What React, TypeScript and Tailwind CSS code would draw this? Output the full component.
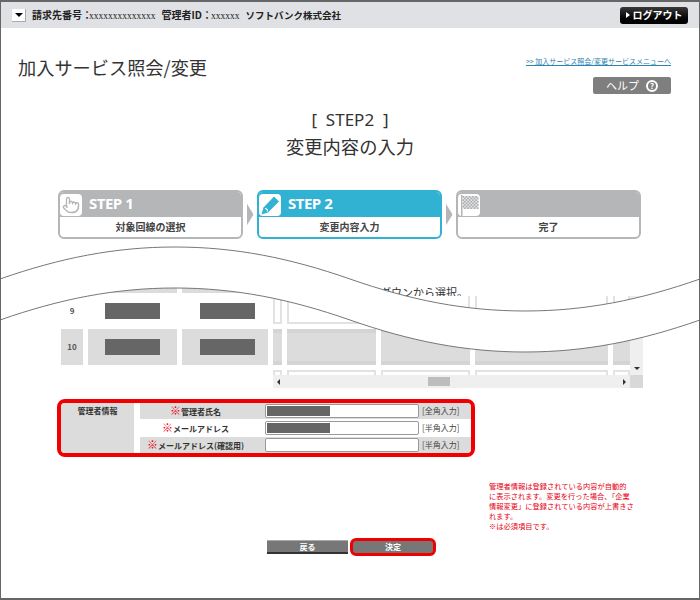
import React from 'react';
import { Pointer } from 'lucide-react';

const frozenRows = [
  { no: '', h: 'h-[5px]', gray: true, bars: false },
  { no: '9', h: 'h-[26px]', gray: false, bars: true },
  { no: '10', h: 'h-[36px]', gray: true, bars: true },
];

const scrollCols = [0, 1, 2, 3, 4];

const Bar = () => <div className="w-[55px] h-[16px] bg-[#666666]" />;

const FlagIcon = () => (
  <svg width="22" height="22" viewBox="0 0 22 22">
    <rect x="3" y="1" width="1.5" height="21" fill="#b4b6b8" />
    <rect x="4.5" y="2" width="16" height="13" fill="#e6e6e7" />
    {[0, 1, 2, 3, 4, 5, 6, 7, 8, 9].map((col) =>
      [0, 1, 2, 3, 4, 5, 6, 7].map((row) =>
        (col + row) % 2 === 0 ? (
          <rect key={`${col}-${row}`} x={4.5 + col * 1.6} y={2 + row * 1.625} width="1.6" height="1.625" fill="#a8aaac" />
        ) : null,
      ),
    )}
  </svg>
);

const PencilIcon = () => (
  <svg width="22" height="22" viewBox="0 0 22 22">
    <path d="M15 2.5l5 5L9 18.5l-6.5 2 2-7z" fill="#32b2d2" />
    <path d="M6 14.5c1.8 0 2.8 1.2 2.2 3" fill="none" stroke="#ffffff" strokeWidth="1.2" />
  </svg>
);

const StepCard = ({
  label,
  title,
  icon,
  active,
}: {
  label: string;
  title: string;
  icon: React.ReactNode;
  active?: boolean;
}) => (
  <div className={`w-[185px] h-[49px] rounded-[6px] border-2 overflow-hidden flex flex-col ${active ? 'border-[#32b2d2]' : 'border-[#b4b6b8]'}`}>
    <div className={`h-[25px] shrink-0 flex items-center ${active ? 'bg-[#32b2d2]' : 'bg-[#b4b6b8]'}`}>
      <div className="w-[22px] h-[22px] bg-white rounded-[4px] flex items-center justify-center shrink-0">{icon}</div>
      <span className="ml-[7px] -mt-[2px] font-['Open_Sans',sans-serif] font-bold text-[15px] tracking-[-0.5px] leading-none text-white">{label}</span>
    </div>
    <div className="flex-1 flex items-center justify-center pb-[2px] text-[10px] font-bold text-[#444444]">{title}</div>
  </div>
);

const Chevron = () => <div className="w-[7px] h-[23px] bg-[#b4b6b8] [clip-path:polygon(0_0,100%_50%,0_100%)]" />;

const InfoRow = ({
  label,
  note,
  filled,
  gray,
  h,
}: {
  label: string;
  note: string;
  filled?: boolean;
  gray?: boolean;
  h: string;
}) => (
  <div className={`${h} flex items-center ${gray ? 'bg-[#dcdcdc]' : 'bg-white'}`}>
    <div className="w-[125px] pr-[14px] text-center text-[8px] font-bold text-[#333333] whitespace-nowrap">
      <span className="text-[11px] leading-none text-[#e60012] font-bold">※</span>
      {label}
    </div>
    <div className="w-[154px] h-[14px] bg-white border border-[#999999] rounded-[2px] p-[1px]">
      {filled && <div className="w-[63px] h-full bg-[#666666]" />}
    </div>
    <span className="ml-[3px] text-[8px] text-[#444444] whitespace-nowrap">{note}</span>
  </div>
);

export default function App() {
  return (
    <div className="relative w-[700px] h-[600px] bg-white border-y-2 border-x border-[#666666] overflow-hidden font-['Noto_Sans_CJK_JP',sans-serif] text-[#333333]">
      {/* ヘッダー */}
      <div className="h-[26px] bg-[#e0e1e4] flex items-center pl-[11px] pr-[11px]">
        <div className="w-[14px] h-[13px] bg-white border-b border-r border-[#aaaaaa] flex items-center justify-center">
          <div className="w-0 h-0 border-x-[4px] border-x-transparent border-t-[4px] border-t-black" />
        </div>
        <div className="ml-[6px] flex items-baseline text-[10px] font-bold whitespace-nowrap text-[#222222]">
          <span>請求先番号：</span>
          <span className="-ml-[3px] font-['Liberation_Serif',serif] text-[9.5px] font-normal">xxxxxxxxxxxxxx</span>
          <span className="ml-[6px]">管理者ID：</span>
          <span className="-ml-[1px] font-['Liberation_Serif',serif] text-[9.5px] font-normal">xxxxxx</span>
          <span className="ml-[6px] text-[9.5px]">ソフトバンク株式会社</span>
        </div>
        <div className="ml-auto w-[68px] h-[17px] rounded-[3px] bg-linear-to-b from-[#3a3a3a] to-black flex items-center justify-center gap-[3px]">
          <div className="w-0 h-0 border-y-[3px] border-y-transparent border-l-[4px] border-l-white" />
          <span className="text-[10px] font-bold text-white leading-none">ログアウト</span>
        </div>
      </div>

      {/* タイトル */}
      <div className="h-[66px] flex justify-between pl-[17px] pr-[28px]">
        <h1 className="mt-[27px] text-[18.2px] leading-[24px] whitespace-nowrap">加入サービス照会/変更</h1>
        <div className="flex flex-col items-end">
          <a className="mt-[27px] h-[12px] text-[7px] leading-[12px] text-[#2a83b0] underline whitespace-nowrap">&gt;&gt; 加入サービス照会/変更サービスメニューへ</a>
          <div className="mt-[10px] w-[78px] h-[17px] rounded-[2px] bg-[#7f7f7f] flex items-center justify-center gap-[7px]">
            <span className="text-[11px] leading-none text-white">ヘルプ</span>
            <span className="w-[12px] h-[12px] rounded-full border-2 border-white text-white text-[8px] font-bold leading-none flex items-center justify-center">?</span>
          </div>
        </div>
      </div>

      {/* STEP見出し */}
      <div className="mt-[14px] text-center text-[#333333]">
        <div className="text-[17px] leading-[24px] font-['Noto_Sans',sans-serif] whitespace-pre">{'[  STEP2  ]'}</div>
        <div className="mt-[1px] text-[18.3px] leading-[26px]">変更内容の入力</div>
      </div>

      {/* ステップ */}
      <div className="mt-[31px] ml-[57px] flex items-center gap-[3.5px]">
        <StepCard label="STEP 1" title="対象回線の選択" icon={<Pointer size={18} strokeWidth={1.8} className="text-[#b4b6b8]" />} />
        <Chevron />
        <StepCard label="STEP 2" title="変更内容入力" icon={<PencilIcon />} active />
        <Chevron />
        <StepCard label="" title="完了" icon={<FlagIcon />} />
      </div>

      <p className="mt-[46px] h-[14px] pl-[357px] text-[11px] leading-[14px] whitespace-nowrap">プルダウンから選択。</p>

      {/* 一覧テーブル */}
      <div className="-mt-[11px] ml-[60px] w-[582px] h-[100px] flex items-end text-[#444444]">
        <div className="w-[212px] h-[100px] grid grid-cols-[22px_89px_86px] gap-[5px] content-start">
          {frozenRows.map((row) => (
            <React.Fragment key={row.h}>
              <div className={`${row.h} flex items-center justify-center text-[8px] font-bold text-[#555555] ${row.gray ? 'bg-[#dcdcdc]' : 'bg-white'}`}>{row.no}</div>
              {[0, 1].map((i) => (
                <div key={i} className={`${row.h} flex items-center justify-center ${i === 1 ? 'pl-[5px]' : ''} ${row.gray ? 'bg-[#dcdcdc]' : 'bg-white'}`}>
                  {row.bars && <Bar />}
                </div>
              ))}
            </React.Fragment>
          ))}
        </div>
        <div className="w-[370px] h-[92px] flex flex-col">
          <div className="h-[79px] flex">
            <div className="w-[357px] h-[79px] overflow-hidden grid grid-cols-[9px_89px_89px_133px_17px] grid-rows-[28px_36px_10px] gap-[5px]">
              {scrollCols.map((c) => (
                <div key={`a${c}`} className="border-x-2 border-b-2 border-[#e2e2e2] bg-white" />
              ))}
              {scrollCols.map((c) => (
                <div key={`b${c}`} className="bg-[#dcdcdc] border-y-4 border-y-[#d4d4d4]" />
              ))}
              {scrollCols.map((c) => (
                <div key={`c${c}`} className="border-x-2 border-t-2 border-[#e2e2e2] bg-white" />
              ))}
            </div>
            <div className="w-[13px] bg-[#efefef] flex flex-col justify-end items-center pb-[5px]">
              <div className="w-0 h-0 border-x-[3px] border-x-transparent border-t-[3px] border-t-[#333333]" />
            </div>
          </div>
          <div className="h-[13px] flex">
            <div className="w-[357px] bg-[#efefef] flex items-center px-[4px]">
              <div className="w-0 h-0 border-y-[3px] border-y-transparent border-r-[3px] border-r-[#333333]" />
              <div className="w-[22px] h-[9px] ml-[148px] bg-[#bdbdbd]" />
              <div className="ml-auto w-0 h-0 border-y-[3px] border-y-transparent border-l-[3px] border-l-[#333333]" />
            </div>
            <div className="w-[13px] bg-[#d8d8d8]" />
          </div>
        </div>
      </div>

      {/* 管理者情報 */}
      <div className="mt-[11px] ml-[56px] w-[418px] h-[58px] border-4 border-[#f00000] rounded-[8px] overflow-hidden flex">
        <div className="w-[73px] bg-[#dcdcdc] text-center text-[8px] leading-[14px] pt-[1px] font-bold text-[#333333]">管理者情報</div>
        <div className="ml-[6px] flex-1 flex flex-col">
          <InfoRow h="h-[16px]" gray filled label="管理者氏名" note="[全角入力]" />
          <InfoRow h="h-[18px]" filled label="メールアドレス" note="[半角入力]" />
          <InfoRow h="h-[16px]" gray label="メールアドレス(確認用)" note="[半角入力]" />
        </div>
      </div>

      {/* 注意書き */}
      <div className="mt-[24px] ml-[488px] w-[150px] text-[7.25px] leading-[10px] whitespace-nowrap text-[#e60012]">
        管理者情報は登録されている内容が自動的
        <br />
        に表示されます。変更を行った場合、「企業
        <br />
        情報変更」に登録されている内容が上書きさ
        <br />
        れます。
        <br />
        ※は必須項目です。
      </div>

      {/* ボタン */}
      <div className="mt-[7px] ml-[266px] flex items-center gap-[2px]">
        <div className="w-[81px] h-[14px] bg-[#777777] border-t border-t-[#aaaaaa] border-b-2 border-b-[#333333] flex items-center justify-center text-[8px] font-bold text-white">戻る</div>
        <div className="w-[86px] h-[18px] border-[3px] border-[#f00000] rounded-[6px] bg-[#777777] flex items-center justify-center text-[8px] font-bold text-white">決定</div>
      </div>

      {/* 省略の波線 */}
      <svg className="absolute -left-px -top-[2px]" width="700" height="600" viewBox="0 0 700 600">
        <path
          d="M0 279C60 258 115 247 175 247C235 247 290 258 350 279C410 300 465 311 525 311C585 311 640 300 700 279V320C640 341 585 352 525 352C465 352 410 341 350 320C290 299 235 288 175 288C115 288 60 299 0 320Z"
          fill="#ffffff"
        />
        <path d="M0 279C60 258 115 247 175 247C235 247 290 258 350 279C410 300 465 311 525 311C585 311 640 300 700 279" fill="none" stroke="#777777" />
        <path d="M0 320C60 299 115 288 175 288C235 288 290 299 350 320C410 341 465 352 525 352C585 352 640 341 700 320" fill="none" stroke="#777777" />
      </svg>
    </div>
  );
}
